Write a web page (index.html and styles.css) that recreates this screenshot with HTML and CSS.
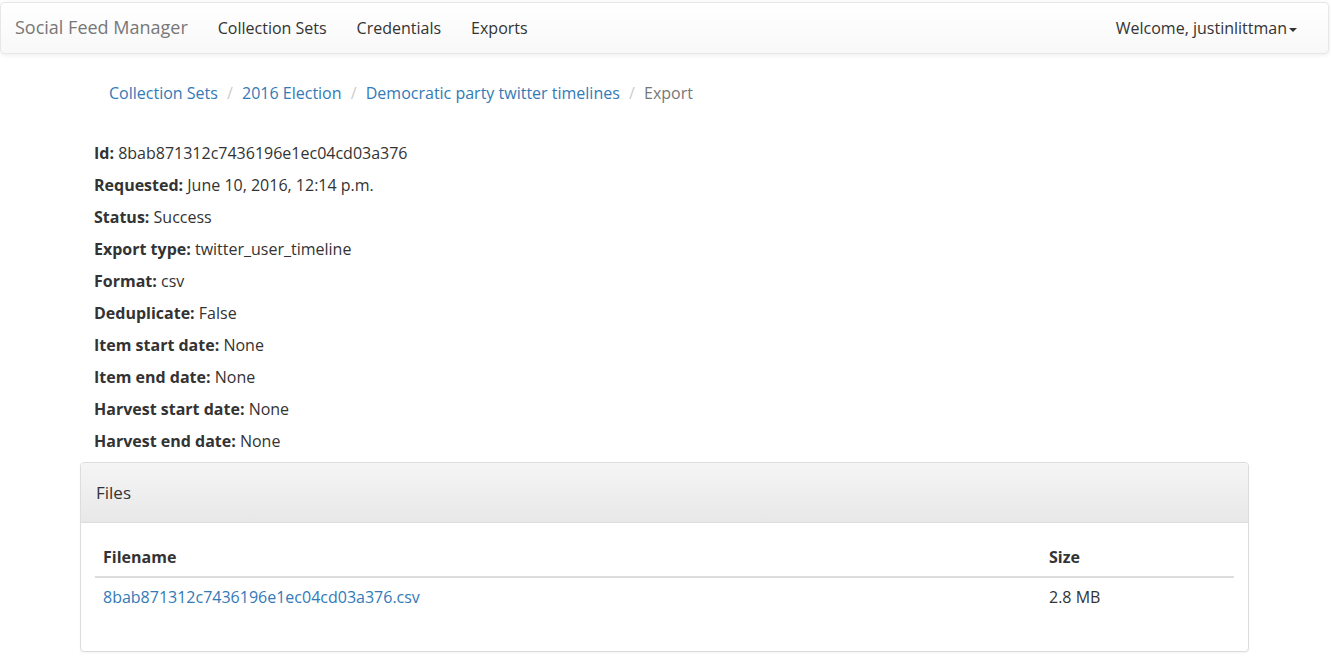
FILE: index.html
```html
<!DOCTYPE html>
<html lang="en">
<head>
<meta charset="utf-8">
<title>Export - Social Feed Manager</title>
<link rel="stylesheet" href="styles.css">
</head>
<body>
<nav class="navbar">
  <div class="navbar-left">
    <a class="brand" href="#">Social Feed Manager</a>
    <ul class="nav">
      <li><a href="#">Collection Sets</a></li>
      <li><a href="#">Credentials</a></li>
      <li><a href="#">Exports</a></li>
    </ul>
  </div>
  <ul class="nav nav-right">
    <li><a href="#">Welcome, justinlittman<span class="caret"></span></a></li>
  </ul>
</nav>
<div class="container">
  <ol class="breadcrumb">
    <li><a href="#">Collection Sets</a></li>
    <li><a href="#">2016 Election</a></li>
    <li><a href="#">Democratic party twitter timelines</a></li>
    <li class="active">Export</li>
  </ol>
  <div class="details">
    <p><b>Id:</b> 8bab871312c7436196e1ec04cd03a376</p>
    <p><b>Requested:</b> June 10, 2016, 12:14 p.m.</p>
    <p><b>Status:</b> Success</p>
    <p><b>Export type:</b> twitter_user_timeline</p>
    <p><b>Format:</b> csv</p>
    <p><b>Deduplicate:</b> False</p>
    <p><b>Item start date:</b> None</p>
    <p><b>Item end date:</b> None</p>
    <p><b>Harvest start date:</b> None</p>
    <p><b>Harvest end date:</b> None</p>
  </div>
  <div class="row">
    <div class="panel">
      <div class="panel-heading">Files</div>
      <div class="panel-body">
        <table class="table">
          <thead>
            <tr><th>Filename</th><th class="col-size">Size</th></tr>
          </thead>
          <tbody>
            <tr><td><a href="#">8bab871312c7436196e1ec04cd03a376.csv</a></td><td>2.8 MB</td></tr>
          </tbody>
        </table>
      </div>
    </div>
  </div>
</div>
</body>
</html>
```
FILE: styles.css
```css
* { box-sizing: border-box; }
html, body { margin: 0; padding: 0; }
body {
  font-family: "Open Sans", "Liberation Sans", sans-serif;
  font-size: 16px;
  line-height: 22px;
  color: #333;
  background: #fff;
}
a { color: #337ab7; text-decoration: none; }

.navbar {
  display: flex;
  justify-content: space-between;
  align-items: stretch;
  margin: 2px 2px 20px 0;
  height: 52px;
  border: 1px solid #e7e7e7;
  border-radius: 4px;
  background: linear-gradient(to bottom, #fff 0, #f8f8f8 100%);
  box-shadow: inset 0 1px 0 rgba(255,255,255,.15), 0 1px 5px rgba(0,0,0,.075);
}
.navbar-left { display: flex; }
.brand {
  display: block;
  padding: 14px 15px 15px 14px;
  font-size: 18px;
  line-height: 21px;
  color: #777;
}
.nav { display: flex; list-style: none; margin: 0; padding: 0; }
.nav a {
  display: block;
  padding: 15px 15px;
  line-height: 20px;
  color: #333;
}
.nav-right { padding-right: 16px; }
.caret {
  display: inline-block;
  width: 0; height: 0;
  margin-left: 2px;
  vertical-align: middle;
  border-top: 4px solid #333;
  border-left: 4px solid transparent;
  border-right: 4px solid transparent;
}

.container {
  width: 1170px;
  margin: 0 0 0 79px;
  padding: 0 15px;
}
.breadcrumb {
  list-style: none;
  margin: 0 0 20px;
  padding: 8px 15px;
  line-height: 22px;
}
.breadcrumb li { display: inline-block; }
.breadcrumb li + li::before {
  content: "/\00a0";
  padding: 0 5px;
  color: #ccc;
}
.breadcrumb .active { color: #777; }

.details { padding-top: 10px; }
.details p { margin: 0 0 10px; }
.details b { font-weight: 700; }

.row { margin: 0 -15px 0 -14px; }
.panel {
  border: 1px solid #ddd;
  border-radius: 4px;
  background: #fff;
  box-shadow: 0 1px 2px rgba(0,0,0,.05);
  margin-bottom: 20px;
}
.panel-heading {
  padding: 18px 15px;
  font-size: 17px;
  line-height: 23px;
  color: #333;
  border-bottom: 1px solid #ddd;
  border-radius: 3px 3px 0 0;
  background: linear-gradient(to bottom, #f5f5f5 0, #e8e8e8 100%);
}
.panel-body { padding: 15px 14px 15px 14px; }
.table {
  width: 100%;
  border-collapse: collapse;
  border-spacing: 0;
  margin-bottom: 20px;
}
.table th, .table td {
  text-align: left;
  padding: 8px;
  line-height: 22px;
  vertical-align: top;
}
.table th {
  font-weight: 700;
  border-bottom: 2px solid #ddd;
}
.table .col-size { width: 193px; }
```
